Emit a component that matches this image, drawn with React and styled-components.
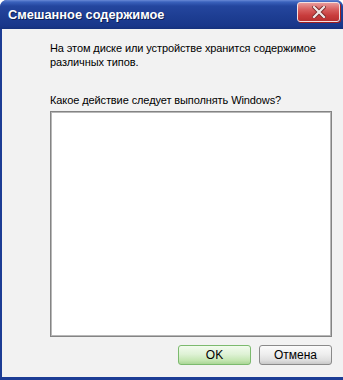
import React from 'react';
import styled, { createGlobalStyle } from 'styled-components';

const GlobalStyle = createGlobalStyle`
  html, body {
    margin: 0;
    padding: 0;
    background: #ffffff;
  }
  body {
    font-family: Tahoma, "DejaVu Sans", "Liberation Sans", sans-serif;
  }
`;

const Window = styled.div`
  width: 343px;
  height: 380px;
  display: flex;
  flex-direction: column;
  overflow: hidden;
  background: #1d3d95;
  border-radius: 7px 7px 0 0;
`;

const TitleBar = styled.div`
  height: 29px;
  flex: none;
  display: flex;
  align-items: center;
  justify-content: space-between;
  padding: 0 3px 0 8px;
  box-sizing: border-box;
  background: linear-gradient(
    to bottom,
    #6a8ad6 0px,
    #3a62bc 2px,
    #24469e 6px,
    #1e3e93 16px,
    #19378a 26px,
    #15317c 29px
  );
`;

const Title = styled.span`
  color: #ffffff;
  font-family: "Liberation Sans", Arial, sans-serif;
  font-weight: bold;
  font-size: 12.8px;
  text-shadow: 1px 1px 0 #0c1f55;
`;

const CloseButton = styled.div`
  width: 43px;
  height: 20px;
  margin-top: -6px;
  box-sizing: border-box;
  border: 1px solid #f4e0e0;
  border-radius: 3px;
  background: linear-gradient(to bottom, #e89a9a 0%, #d86060 35%, #c83c3c 70%, #b83030 100%);
  display: flex;
  align-items: center;
  justify-content: center;
  box-shadow: 1px 1px 0 #a02020;
`;

const Body = styled.div`
  flex: 1;
  display: flex;
  flex-direction: column;
  background: #f2f2f2;
  margin: 0 0 3px 2px;
  padding: 12px 11px 12px 48px;
  font-family: "Liberation Sans", Arial, sans-serif;
  font-size: 11px;
  letter-spacing: -0.1px;
  color: #000000;
`;

const Text = styled.p`
  margin: ${(p) => p.$mt || 0}px 0 0 0;
  line-height: 14px;
  white-space: nowrap;
`;

const ListBox = styled.div`
  flex: 1;
  margin-top: 4px;
  background: #ffffff;
  border: 1px solid #848484;
  box-shadow: inset 0 0 0 1px #b8b8b8;
`;

const ButtonRow = styled.div`
  display: flex;
  justify-content: flex-end;
  gap: 8px;
  margin-top: 8px;
`;

const Button = styled.div`
  width: 73px;
  height: 20px;
  box-sizing: border-box;
  border: 1px solid ${(p) => (p.$primary ? '#7cba6e' : '#8a8a8a')};
  border-radius: 3px;
  display: flex;
  align-items: center;
  justify-content: center;
  font-size: 12px;
  letter-spacing: 0;
  color: #000;
  background: ${(p) =>
    p.$primary
      ? 'linear-gradient(to bottom, #f2fbee 0%, #dff2d6 45%, #c4e6b2 80%, #aad696 100%)'
      : 'linear-gradient(to bottom, #fbfbfb 0%, #eeeeee 45%, #dedede 80%, #c8c8c8 100%)'};
`;

const CloseIcon = () => (
  <svg width="14" height="12" viewBox="0 0 14 12">
    <path d="M2 1 L12 11 M12 1 L2 11" stroke="#7a2a2a" strokeWidth="4" strokeLinecap="square" />
    <path d="M2 1 L12 11 M12 1 L2 11" stroke="#f0e8e8" strokeWidth="2.2" strokeLinecap="square" />
  </svg>
);

export default function App() {
  return (
    <>
      <GlobalStyle />
      <Window>
        <TitleBar>
          <Title>Смешанное содержимое</Title>
          <CloseButton>
            <CloseIcon />
          </CloseButton>
        </TitleBar>
        <Body>
          <Text>
            На этом диске или устройстве хранится содержимое
            <br />
            различных типов.
          </Text>
          <Text $mt={24}>Какое действие следует выполнять Windows?</Text>
          <ListBox />
          <ButtonRow>
            <Button $primary>OK</Button>
            <Button>Отмена</Button>
          </ButtonRow>
        </Body>
      </Window>
    </>
  );
}
